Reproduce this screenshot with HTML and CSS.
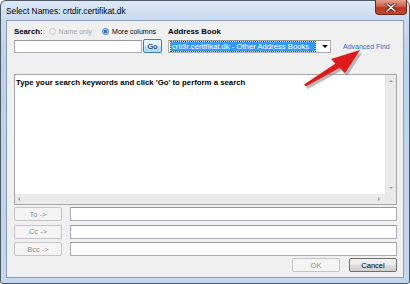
FILE: index.html
```html
<!DOCTYPE html>
<html>
<head>
<meta charset="utf-8">
<link rel="stylesheet" href="styles.css">
</head>
<body>
<div class="window">
  <div class="titlebar">
    <span class="title">Select Names: crtdir.certifikat.dk</span>
    <div class="close">
      <svg width="12" height="9" viewBox="0 0 12 9"><path d="M2 1 L10 8 M10 1 L2 8" stroke="#5a1a10" stroke-width="3.2" stroke-linecap="round"/><path d="M2 1 L10 8 M10 1 L2 8" stroke="#fff" stroke-width="1.6" stroke-linecap="round"/></svg>
    </div>
  </div>
  <div class="client">
    <div class="top">
      <div class="search-col">
        <div class="label-row">
          <span class="bold">Search:</span>
          <span class="radio disabled"></span><span class="dim small">Name only</span>
          <span class="radio checked"></span><span class="small">More columns</span>
        </div>
        <div class="input-row">
          <div class="field search-field"></div>
          <div class="btn go">Go</div>
        </div>
      </div>
      <div class="ab-col">
        <div class="label-row"><span class="bold">Address Book</span></div>
        <div class="input-row">
          <div class="field combo">
            <span class="sel">crtdir.certifikat.dk - Other Address Books</span>
            <span class="caret"></span>
          </div>
          <span class="link">Advanced Find</span>
        </div>
      </div>
    </div>
    <div class="list">
      <div class="list-body"><span class="bold">Type your search keywords and click 'Go' to perform a search</span></div>
      <div class="vscroll"><span class="up"></span><span class="down"></span></div>
      <div class="hscroll"><span class="left"></span><span class="right"></span></div>
      <div class="corner"></div>
    </div>
    <div class="recips">
      <div class="recip"><div class="btn dis rbtn">To -&gt;</div><div class="field rfield"></div></div>
      <div class="recip"><div class="btn dis rbtn">Cc -&gt;</div><div class="field rfield"></div></div>
      <div class="recip"><div class="btn dis rbtn">Bcc -&gt;</div><div class="field rfield"></div></div>
    </div>
    <div class="actions">
      <div class="btn dis act">OK</div>
      <div class="btn act cancel">Cancel</div>
    </div>
  </div>
  <svg class="arrow" width="410" height="284" viewBox="0 0 410 284">
    <g class="arrow-shadow" fill="#7a7a7a" opacity="0.5" transform="translate(2,3)">
      <path d="M304 84 L337 63 L339.5 67.5 L306 86 Z"/>
      <path d="M360 50 L331 59 L345 73 Z"/>
    </g>
    <g fill="#e01a1a">
      <path d="M304 84.5 L337 62.5 L340 67.5 L306 86.5 Z"/>
      <path d="M360 50 L331 59 L345 73 Z"/>
    </g>
  </svg>
</div>
</body>
</html>
```

FILE: styles.css
```css
* { box-sizing: border-box; }
html, body { margin: 0; padding: 0; }
body {
  width: 410px;
  height: 284px;
  overflow: hidden;
  background: #ffffff;
  font-family: "Liberation Sans", Arial, sans-serif;
  font-size: 7.5px;
  color: #000;
}
.window {
  position: relative;
  width: 410px;
  height: 284px;
  border: 1px solid #4e5866;
  border-radius: 6px 6px 3px 3px;
  background: linear-gradient(#dde9f7, #c8dbf0 18px, #bcd2ec 60px, #c3d7ee);
  display: flex;
  flex-direction: column;
  padding: 0 5px 5px 5px;
}
.titlebar {
  height: 19px;
  display: flex;
  align-items: flex-start;
  justify-content: space-between;
}
.title {
  font-size: 8.4px;
  margin-top: 6px;
  line-height: 9px;
}
.close {
  width: 32px;
  height: 15px;
  margin-right: -3px;
  margin-top: -1px;
  border: 1px solid #6b2a20;
  border-top: none;
  border-radius: 0 0 4px 4px;
  background: linear-gradient(#e7a08e, #d2624a 45%, #b8351f 55%, #c9472e);
  display: flex;
  align-items: center;
  justify-content: center;
}
.client {
  flex: 1;
  border: 1px solid #8c9db3;
  background: #f0f0f0;
  padding: 5px 6px 5px 7px;
  display: flex;
  flex-direction: column;
}
.bold { font-weight: bold; font-size: 7.8px; }
.small { font-size: 7px; }
.top { display: flex; }
.search-col { width: 154px; }
.label-row {
  height: 11px;
  display: flex;
  align-items: center;
  line-height: 11px;
  white-space: nowrap;
}
.radio {
  width: 7px;
  height: 7px;
  border-radius: 50%;
  border: 1px solid #8a8a8a;
  background: linear-gradient(#e4e4e4, #ffffff);
  margin-right: 3px;
}
.radio.disabled {
  margin-left: 6px;
  border-color: #c8c8c8;
  background: #f4f4f4;
}
.radio.checked {
  margin-left: 10px;
  border-color: #5a7fa8;
  background: radial-gradient(circle, #2b7bd0 0 1.6px, #9ccaf0 2px, #dbe9f6 3px);
}
.dim { color: #a6a6a6; }
.input-row {
  margin-top: 2px;
  height: 14px;
  display: flex;
  align-items: center;
}
.field {
  background: #fff;
  border: 1px solid #abadb3;
  border-top-color: #999;
}
.search-field { width: 128px; height: 13px; }
.btn {
  height: 14px;
  display: flex;
  align-items: center;
  justify-content: center;
  border-radius: 2px;
  font-size: 7.5px;
}
.go {
  width: 19px;
  margin-left: 1px;
  border: 1px solid #3c7fb1;
  background: linear-gradient(#eaf6fd, #d9f0fc 50%, #bee6fd 51%, #a7d9f5);
}
.combo {
  width: 163px;
  height: 13px;
  display: flex;
  align-items: center;
  padding: 1px 2px;
  position: relative;
}
.sel {
  background: #3399ff;
  color: #fff;
  width: 146px;
  height: 9px;
  line-height: 9px;
  font-size: 7.7px;
  padding-left: 1px;
  white-space: nowrap;
  overflow: hidden;
  outline: 1px dotted #1a4d80;
}
.caret {
  margin-left: 7px;
  width: 0;
  height: 0;
  border-left: 3px solid transparent;
  border-right: 3px solid transparent;
  border-top: 3px solid #000;
}
.link {
  margin-left: 12px;
  color: #3366cc;
  font-size: 7px;
  white-space: nowrap;
}
.list {
  margin-top: 21px;
  height: 131px;
  border: 1px solid #a7a7a7;
  background: #fff;
  display: grid;
  grid-template-columns: 1fr 11px;
  grid-template-rows: 1fr 10px;
}
.list-body {
  padding: 3px 1px;
  line-height: 9px;
  white-space: nowrap;
}
.vscroll, .hscroll, .corner {
  background: #eaeaea;
  position: relative;
}
.vscroll { border-left: 1px solid #e4e4e4; }
.up, .down, .left, .right {
  position: absolute;
  width: 0; height: 0;
}
.up {
  top: 5px; left: 3px;
  border-left: 2px solid transparent;
  border-right: 2px solid transparent;
  border-bottom: 2px solid #9a9a9a;
}
.down {
  bottom: 5px; left: 3px;
  border-left: 2px solid transparent;
  border-right: 2px solid transparent;
  border-top: 2px solid #9a9a9a;
}
.left {
  left: 3px; top: 3px;
  border-top: 2px solid transparent;
  border-bottom: 2px solid transparent;
  border-right: 2px solid #9a9a9a;
}
.right {
  right: 5px; top: 3px;
  border-top: 2px solid transparent;
  border-bottom: 2px solid transparent;
  border-left: 2px solid #9a9a9a;
}
.recips {
  margin-top: 2px;
  display: flex;
  flex-direction: column;
  gap: 3.5px;
}
.recip { display: flex; align-items: center; gap: 8px; }
.dis {
  border: 1px solid #c5c5c5;
  background: #f4f4f4;
  color: #8e8e8e;
}
.rbtn { width: 48px; }
.rfield { flex: 1; height: 14px; }
.actions {
  margin-top: auto;
  display: flex;
  justify-content: flex-end;
  gap: 9px;
}
.act { width: 48px; }
.cancel {
  border: 1px solid #707070;
  background: linear-gradient(#f2f2f2, #ebebeb 50%, #dddddd 51%, #cfcfcf);
}
.arrow {
  position: absolute;
  left: -1px;
  top: -1px;
  pointer-events: none;
}
```
